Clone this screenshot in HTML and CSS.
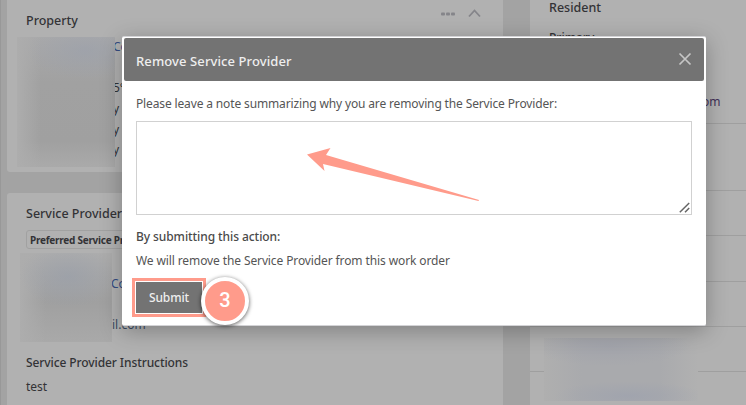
FILE: index.html
```html
<!DOCTYPE html>
<html lang="en">
<head>
<meta charset="utf-8">
<title>Remove Service Provider</title>
<link rel="stylesheet" href="styles.css">
</head>
<body>
<main class="page">
  <div class="left">
    <section class="card property">
      <header class="card-head">
        <h2>Property</h2>
        <svg class="tools" width="42" height="12" viewBox="0 0 42 12"><g fill="#85858a"><rect x="1" y="4.500" width="4" height="3" rx="1"/><rect x="6" y="4.500" width="4" height="3" rx="1"/><rect x="11" y="4.500" width="4" height="3" rx="1"/></g><path d="M29 8.500l5.500-6 5.500 6" fill="none" stroke="#85858a" stroke-width="1.800"/></svg>
      </header>
      <div class="details">
        <div class="redacted redacted-property"></div>
        <div class="fragments"><span class="link">Co</span><span></span><span>5°</span><span>y</span><span>y l</span><span>y</span></div>
      </div>
    </section>
    <section class="card provider">
      <h2>Service Provider</h2>
      <div class="tag"><span>Preferred Service Pr</span></div>
      <div class="details provider-details">
        <div class="redacted redacted-provider"></div>
        <div class="fragments"><span class="link">Co</span><span class="mail">il.com</span></div>
      </div>
      <h3 class="instructions">Service Provider Instructions</h3>
      <p class="test">test</p>
    </section>
  </div>
  <aside class="resident">
    <div class="contact">
      <h2>Resident</h2>
      <h3>Primary</h3>
      <p class="email">om</p>
    </div>
    <div class="row tall"></div>
    <div class="row"></div>
    <div class="row"></div>
    <div class="row"></div>
    <div class="row"></div>
    <div class="row last"></div>
    <div class="redacted-resident"></div>
  </aside>
</main>
<div class="modal" role="dialog">
  <header class="modal-head">
    <h1>Remove Service Provider</h1>
    <svg width="14" height="14" viewBox="0 0 14 14"><path d="M1.500 1.500l11 11M12.500 1.500l-11 11" stroke="#c6c6c6" stroke-width="1.700"/></svg>
  </header>
  <div class="modal-body">
    <p class="prompt">Please leave a note summarizing why you are removing the Service Provider:</p>
    <div class="note"><svg width="11" height="11" viewBox="0 0 11 11"><path d="M.8 10.200l9.400-9.200M6 10.200L10.200 6" stroke="#666" stroke-width="1.500"/></svg></div>
    <p class="by">By submitting this action:</p>
    <p class="will">We will remove the Service Provider from this work order</p>
    <button class="submit"><span>Submit</span></button>
  </div>
  <svg class="arrow" width="175" height="56" viewBox="0 0 175 56"><path d="M1 7.500L24.500 1 20 8 173 53 172.500 54 17 17 18.500 24z" fill="#ff9b8b"/></svg>
  <div class="step">3</div>
</div>
</body>
</html>
```

FILE: styles.css
```css
* { box-sizing: border-box; }
body {
  margin: 0;
  width: 746px;
  height: 405px;
  overflow: hidden;
  background: #a3a3a3;
  color: #333336;
  font: 12px/18px "Noto Sans", "Open Sans", sans-serif;
  position: relative;
}
h1, h2, h3, p { margin: 0; font-size: 12px; line-height: 18px; font-weight: 500; white-space: nowrap; }
h2 { font-size: 12.500px; }
.page {
  display: grid;
  grid-template-columns: 496px 1fr;
  column-gap: 27px;
  height: 405px;
  padding-left: 7px;
  box-shadow: inset 1px 0 #989898;
}
.left { display: flex; flex-direction: column; gap: 21px; height: 405px; }
.card { background: #b1b1b1; }
.property { height: 172px; flex: none; border-radius: 0 0 3px 3px; padding-top: 8px; }
.card-head { display: flex; justify-content: space-between; height: 29px; padding: 4px 21px 0 19px; }
.tools { margin-top: -4px; }
.details { display: flex; }
.redacted { flex: none; position: relative; }
.redacted-property {
  width: 98px;
  height: 130px;
  margin-left: 10px;
  background: radial-gradient(ellipse 58px 28px at 68px 14px, rgba(154, 160, 172, .6), rgba(154, 160, 172, 0)), linear-gradient(90deg, #adadad, rgba(173, 173, 173, 0) 24%), linear-gradient(#a9a9aa, #a1a1a1 35%, #a0a0a0 80%, #aaa);
}
.fragments { display: flex; flex-direction: column; line-height: 20px; overflow: hidden; white-space: nowrap; margin-left: -2px; }
.fragments span { height: 20.700px; }
.link { color: #344c82; }
.provider { flex: 1; border-radius: 3px 3px 0 0; padding: 12px 0 0 19px; }
.tag {
  width: 150px;
  height: 19px;
  margin-top: 7px;
  padding-left: 3px;
  border: 1px solid #a1a1a1;
  border-radius: 3px;
  font-size: 10px;
  line-height: 18px;
  font-weight: 700;
  letter-spacing: -.25px;
  white-space: nowrap;
}
.provider-details { height: 90px; margin: 4px 0 0 -6px; }
.redacted-provider {
  width: 92px;
  height: 89px;
  background: radial-gradient(ellipse 48px 32px at 48px 23px, rgba(150, 157, 170, .55), rgba(150, 157, 170, 0)), linear-gradient(90deg, #adadad, rgba(173, 173, 173, 0) 28%), linear-gradient(#adadad, #a0a0a0 55%, #a9a9a9);
}
.provider-details .fragments { padding-top: 21px; margin-left: 0; }
.provider-details .fragments .link { margin-left: -1px; }
.mail { margin-top: 20px; color: #3b4b61; }
.instructions { margin-top: 11px; letter-spacing: -.09px; }
.test { margin-top: 6px; font-weight: 400; }
.resident { background: #b1b1b1; height: 405px; position: relative; }
.contact { height: 123px; padding: 0 0 0 19px; }
.contact h2 { line-height: 15px; }
.contact h3 { margin-top: 14px; }
.email { margin: 46px 0 0 153px; color: #423158; font-weight: 400; }
.row { height: 45.300px; border-top: 1px solid #9f9f9f; }
.row.tall { height: 67px; }
.row:nth-child(6) { height: 45px; }
.redacted-resident {
  position: absolute;
  left: 14px;
  top: 338px;
  width: 154px;
  height: 63px;
  background: radial-gradient(ellipse 80px 20px at 65px 8px, rgba(160, 162, 171, .75), rgba(160, 162, 171, 0)), radial-gradient(ellipse 75px 15px at 85px 58px, rgba(155, 160, 174, .6), rgba(155, 160, 174, 0)), linear-gradient(90deg, #afafaf, #a9aaad 25%, #a9aaad 75%, #b1b1b1);
}
.modal {
  position: absolute;
  left: 122px;
  top: 36px;
  width: 584px;
  height: 290px;
  padding: 2px;
  background: #fff;
  border: solid #d3d3d6;
  border-width: 1px 0;
  border-radius: 2px;
  box-shadow: 0 5px 22px rgba(0, 0, 0, .28);
}
.modal-head {
  display: flex;
  align-items: center;
  justify-content: space-between;
  height: 43px;
  padding: 0 12px;
  margin-top: -1px;
  background: #737373;
  border-radius: 2px;
  color: #eee;
}
.modal-head h1 { font-size: 13px; letter-spacing: .1px; padding-top: 2px; }
.modal-head svg { margin-top: -2px; }
.modal-body { padding: 14px 12px 0; color: #555; }
.prompt { font-weight: 400; letter-spacing: -.14px; }
.note {
  display: flex;
  align-items: flex-end;
  justify-content: flex-end;
  height: 94px;
  margin-top: 8px;
  padding: 1px;
  border: 1px solid #d1d1d1;
}
.by { margin-top: 13px; color: #4a4a4a; letter-spacing: -.08px; }
.will { margin-top: 6px; font-weight: 400; letter-spacing: -.11px; }
.submit {
  display: block;
  width: 66px;
  height: 31px;
  margin: 12px 0 0;
  padding: 0;
  border: 0;
  background: #737373;
  color: #eee;
  font: 500 12px/31px "Noto Sans", sans-serif;
  letter-spacing: -.1px;
  outline: 3px solid #ff9b8b;
  outline-offset: 1px;
}
.arrow { position: absolute; left: 184px; top: 110px; }
.step {
  position: absolute;
  left: 79px;
  top: 240px;
  width: 48px;
  height: 48px;
  border: 4px solid #fff;
  border-radius: 50%;
  background: #ff9b8b;
  box-shadow: 0 1px 4px rgba(0, 0, 0, .65);
  color: #fff;
  font: 500 20px/38px Roboto, sans-serif;
  text-align: center;
}
```
